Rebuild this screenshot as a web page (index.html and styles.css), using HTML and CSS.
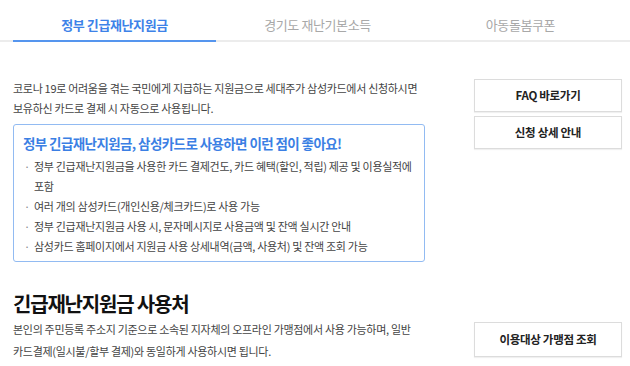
FILE: index.html
```html
<html>
    <head>
        <meta charset="utf-8">
        <link rel="stylesheet" href="styles.css">
    </head>
    <body>
        <div class="tabs">
            <div class="tab tab_active">정부 긴급재난지원금</div>
            <div class="tab">경기도 재난기본소득</div>
            <div class="tab">아동돌봄쿠폰</div>
        </div>

        <div class="section section_first">
            <div class="section_main">
                <p class="desc">코로나 19로 어려움을 겪는 국민에게 지급하는 지원금으로 세대주가 삼성카드에서 신청하시면 보유하신 카드로 결제 시 자동으로 사용됩니다.</p>
                <div class="benefit_box">
                    <h3 class="benefit_title">정부 긴급재난지원금, 삼성카드로 사용하면 이런 점이 좋아요!</h3>
                    <ul class="benefit_list">
                        <li>정부 긴급재난지원금을 사용한 카드 결제건도, 카드 혜택(할인, 적립) 제공 및 이용실적에 포함</li>
                        <li>여러 개의 삼성카드(개인신용/체크카드)로 사용 가능</li>
                        <li>정부 긴급재난지원금 사용 시, 문자메시지로 사용금액 및 잔액 실시간 안내</li>
                        <li>삼성카드 홈페이지에서 지원금 사용 상세내역(금액, 사용처) 및 잔액 조회 가능</li>
                    </ul>
                </div>
            </div>
            <div class="section_side">
                <a class="btn">FAQ 바로가기</a>
                <a class="btn">신청 상세 안내</a>
            </div>
        </div>

        <h2 class="section_title">긴급재난지원금 사용처</h2>
        <div class="section">
            <div class="section_main">
                <p class="desc desc_wide">본인의 주민등록 주소지 기준으로 소속된 지자체의 오프라인 가맹점에서 사용 가능하며, 일반 카드결제(일시불/할부 결제)와 동일하게 사용하시면 됩니다.</p>
            </div>
            <div class="section_side">
                <a class="btn btn_tall">이용대상 가맹점 조회</a>
            </div>
        </div>
    </body>
</html>
```

FILE: styles.css
```css
body {
    margin: 0;
    font-family: "Noto Sans CJK KR", "Noto Sans", sans-serif;
    font-size: 11px;
    letter-spacing: -0.3px;
    word-break: keep-all;
    color: #444;
    background: #fff;
}

/* tabs */
.tabs {
    display: flex;
    padding: 0 8px 0 13px;
    height: 40px;
    border-bottom: 2px solid #ececec;
}
.tab {
    flex: 1;
    text-align: center;
    font-size: 13px;
    line-height: 50px;
    height: 40px;
    color: #a8a8a8;
    letter-spacing: -0.4px;
}
.tab_active {
    color: #3d82e8;
    font-weight: bold;
    border-bottom: 2px solid #5595ee;
}

/* sections */
.section {
    display: flex;
    gap: 49px;
    padding: 0 8px 0 13px;
}
.section_first {
    padding-top: 36px;
}
.section_main {
    width: 412px;
}
.section_side {
    display: flex;
    flex-direction: column;
    gap: 4px;
    flex: 1;
}
.section_first .section_side {
    padding-top: 1px;
}

.desc {
    margin: 0;
    line-height: 20px;
}
.desc_wide {
    line-height: 22px;
}

.benefit_box {
    margin-top: 6px;
    border: 1px solid #92bbf2;
    border-radius: 3px;
    padding: 7px 10px 5px 9px;
}
.benefit_title {
    margin: 0 0 2px 0;
    font-size: 13.5px;
    line-height: 22px;
    color: #3b7fe4;
    letter-spacing: -0.6px;
}
.benefit_list {
    list-style: none;
    margin: 0;
    padding: 0;
}
.benefit_list li {
    position: relative;
    padding-left: 11px;
    line-height: 20px;
}
.benefit_list li::before {
    content: "·";
    position: absolute;
    left: 1px;
    top: 0;
    color: #888;
}

.btn {
    display: block;
    height: 31px;
    line-height: 31px;
    border: 1px solid #dcdcdc;
    box-shadow: 0 1px 1px rgba(0, 0, 0, 0.06);
    text-align: center;
    font-weight: bold;
    font-size: 11.5px;
    color: #222;
    letter-spacing: -0.3px;
}
.btn_tall {
    height: 33px;
    line-height: 33px;
    margin-top: 4px;
}

.section_title {
    margin: 28px 0 0 13px;
    font-size: 20px;
    line-height: 28px;
    letter-spacing: -1.2px;
    color: #111;
}
```
